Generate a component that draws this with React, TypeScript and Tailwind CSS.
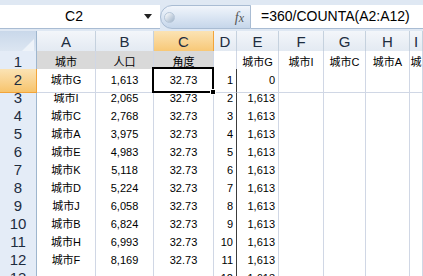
import React from "react";

const cols = ["A", "B", "C", "D", "E", "F", "G", "H", "I"];

const cityA = ["城市", "城市G", "城市I", "城市C", "城市A", "城市E", "城市K", "城市D", "城市J", "城市B", "城市H", "城市F", ""];
const popB = ["人口", "1,613", "2,065", "2,768", "3,975", "4,983", "5,118", "5,224", "6,058", "6,824", "6,993", "8,169", ""];
const header1 = ["城市G", "城市I", "城市C", "城市A", "城"];

const gridCols = "grid grid-cols-[37px_59px_58px_60px_23px_42px_45px_42px_44px_1fr]";
const cellFont = { fontFamily: '"Liberation Sans", "Noto Sans CJK SC", sans-serif' };

function FormulaBar() {
    return (
        <div className="h-[31px] bg-[#dfe8f3] pt-[5px] pb-[2px] flex">
            <div className="w-[160px] h-[24px] bg-white border-b border-[#a9bcd3] flex items-center relative">
                <span className="flex-1 text-center text-[14px] text-black pl-[4px]">C2</span>
                <svg width="8" height="5" viewBox="0 0 8 5" className="mr-[8px]">
                    <polygon points="0,0 8,0 4,5" fill="#222" />
                </svg>
            </div>
            <div className="w-[91px] h-[24px] rounded-l-full border border-[#a9bcd3] bg-gradient-to-b from-[#f1f5fb] via-[#dbe6f3] to-[#c6d6ea] flex items-center">
                <div className="w-[11px] h-[11px] rounded-full ml-[3px] bg-gradient-to-br from-[#ffffff] to-[#9fb3c9] border border-[#b6c6d8]" />
                <span className="ml-auto mr-[6px] text-[14px] italic text-[#555]" style={{ fontFamily: '"Liberation Serif", serif' }}>
                    f<span className="text-[12px]">x</span>
                </span>
            </div>
            <div className="flex-1 h-[24px] bg-white border-b border-[#a9bcd3] flex items-center pl-[10px]">
                <span className="text-[14px] text-black">=360/COUNTA(A2:A12)</span>
            </div>
        </div>
    );
}

function ColumnHeader() {
    return (
        <div className={`${gridCols} h-[20px]`}>
            <div className="border-r border-b border-[#9eb6ce] bg-gradient-to-b from-[#c9d8ea] to-[#dfe8f3] flex items-end justify-end pr-[2px] pb-[2px]">
                <svg width="13" height="13" viewBox="0 0 13 13">
                    <polygon points="13,0 13,13 0,13" fill="#eef3f9" />
                </svg>
            </div>
            {cols.map((c) => (
                <div
                    key={c}
                    className={
                        c === "C"
                            ? "border-r border-b border-[#f2a43a] bg-gradient-to-b from-[#fbe3b4] to-[#f7c46c] flex items-center justify-center text-[15px] text-[#1e2d3f]"
                            : "border-r border-b border-[#c5d1de] bg-gradient-to-b from-[#f3f6fa] to-[#e1e8f1] flex items-center justify-center text-[15px] text-[#1e2d3f]"
                    }
                >
                    {c}
                </div>
            ))}
        </div>
    );
}

function Row({ r }: { r: number }) {
    const i = r - 1;
    const first = r === 1;
    const line = "border-r border-b border-[#d0d7e5]";
    const center = "flex items-center justify-center";
    const right = "flex items-center justify-end pr-[3px]";
    return (
        <div className={`${gridCols} h-[18px] text-[11px] text-black relative ${r === 2 ? "z-10" : ""}`} style={cellFont}>
            <div
                className={
                    r === 2
                        ? "border-r border-b border-[#f2a43a] bg-gradient-to-b from-[#fbe3b4] to-[#f7c46c] flex items-center justify-center text-[15px] text-[#1e2d3f]"
                        : "border-r border-b border-[#9eb6ce] bg-[#e4ecf7] flex items-center justify-center text-[15px] text-[#1e2d3f]"
                }
                style={{ fontFamily: '"Liberation Sans", sans-serif' }}
            >
                {r}
            </div>
            <div className={`${line} ${center} ${first ? "bg-[#d9d9d9]" : "bg-white"}`}>{cityA[i]}</div>
            <div className={`${line} ${center} ${first ? "bg-[#d9d9d9]" : "bg-white"}`}>{popB[i]}</div>
            <div className={`${line} ${center} relative ${first ? "bg-[#d9d9d9]" : "bg-white"}`}>
                {first ? "角度" : r <= 12 ? "32.73" : ""}
                {r === 2 && (
                    <div className="absolute z-10 -left-[2px] -top-[2px] -right-[1px] -bottom-[1px] border-2 border-black">
                        <div className="absolute -right-[4px] -bottom-[4px] w-[6px] h-[6px] bg-black border border-white" />
                    </div>
                )}
            </div>
            <div className={`border-b border-[#d0d7e5] border-r ${first ? "border-r-[#d0d7e5]" : "border-r-[#3c3c3c]"} ${right} bg-white`}>
                {first ? "" : r - 1}
            </div>
            <div className={`${line} ${first ? center : right} bg-white`}>
                {first ? header1[0] : r === 2 ? "0" : "1,613"}
            </div>
            {[1, 2, 3, 4].map((k) => (
                <div key={k} className={`${line} ${center} bg-white overflow-hidden whitespace-nowrap`}>
                    {first ? header1[k] : ""}
                </div>
            ))}
        </div>
    );
}

export default function App() {
    const rows = Array.from({ length: 13 }, (_, k) => k + 1);
    return (
        <div className="w-[423px] h-[276px] overflow-hidden bg-white" style={{ fontFamily: '"Liberation Sans", "Noto Sans CJK SC", sans-serif' }}>
            <FormulaBar />
            <ColumnHeader />
            {rows.map((r) => (
                <Row key={r} r={r} />
            ))}
        </div>
    );
}
